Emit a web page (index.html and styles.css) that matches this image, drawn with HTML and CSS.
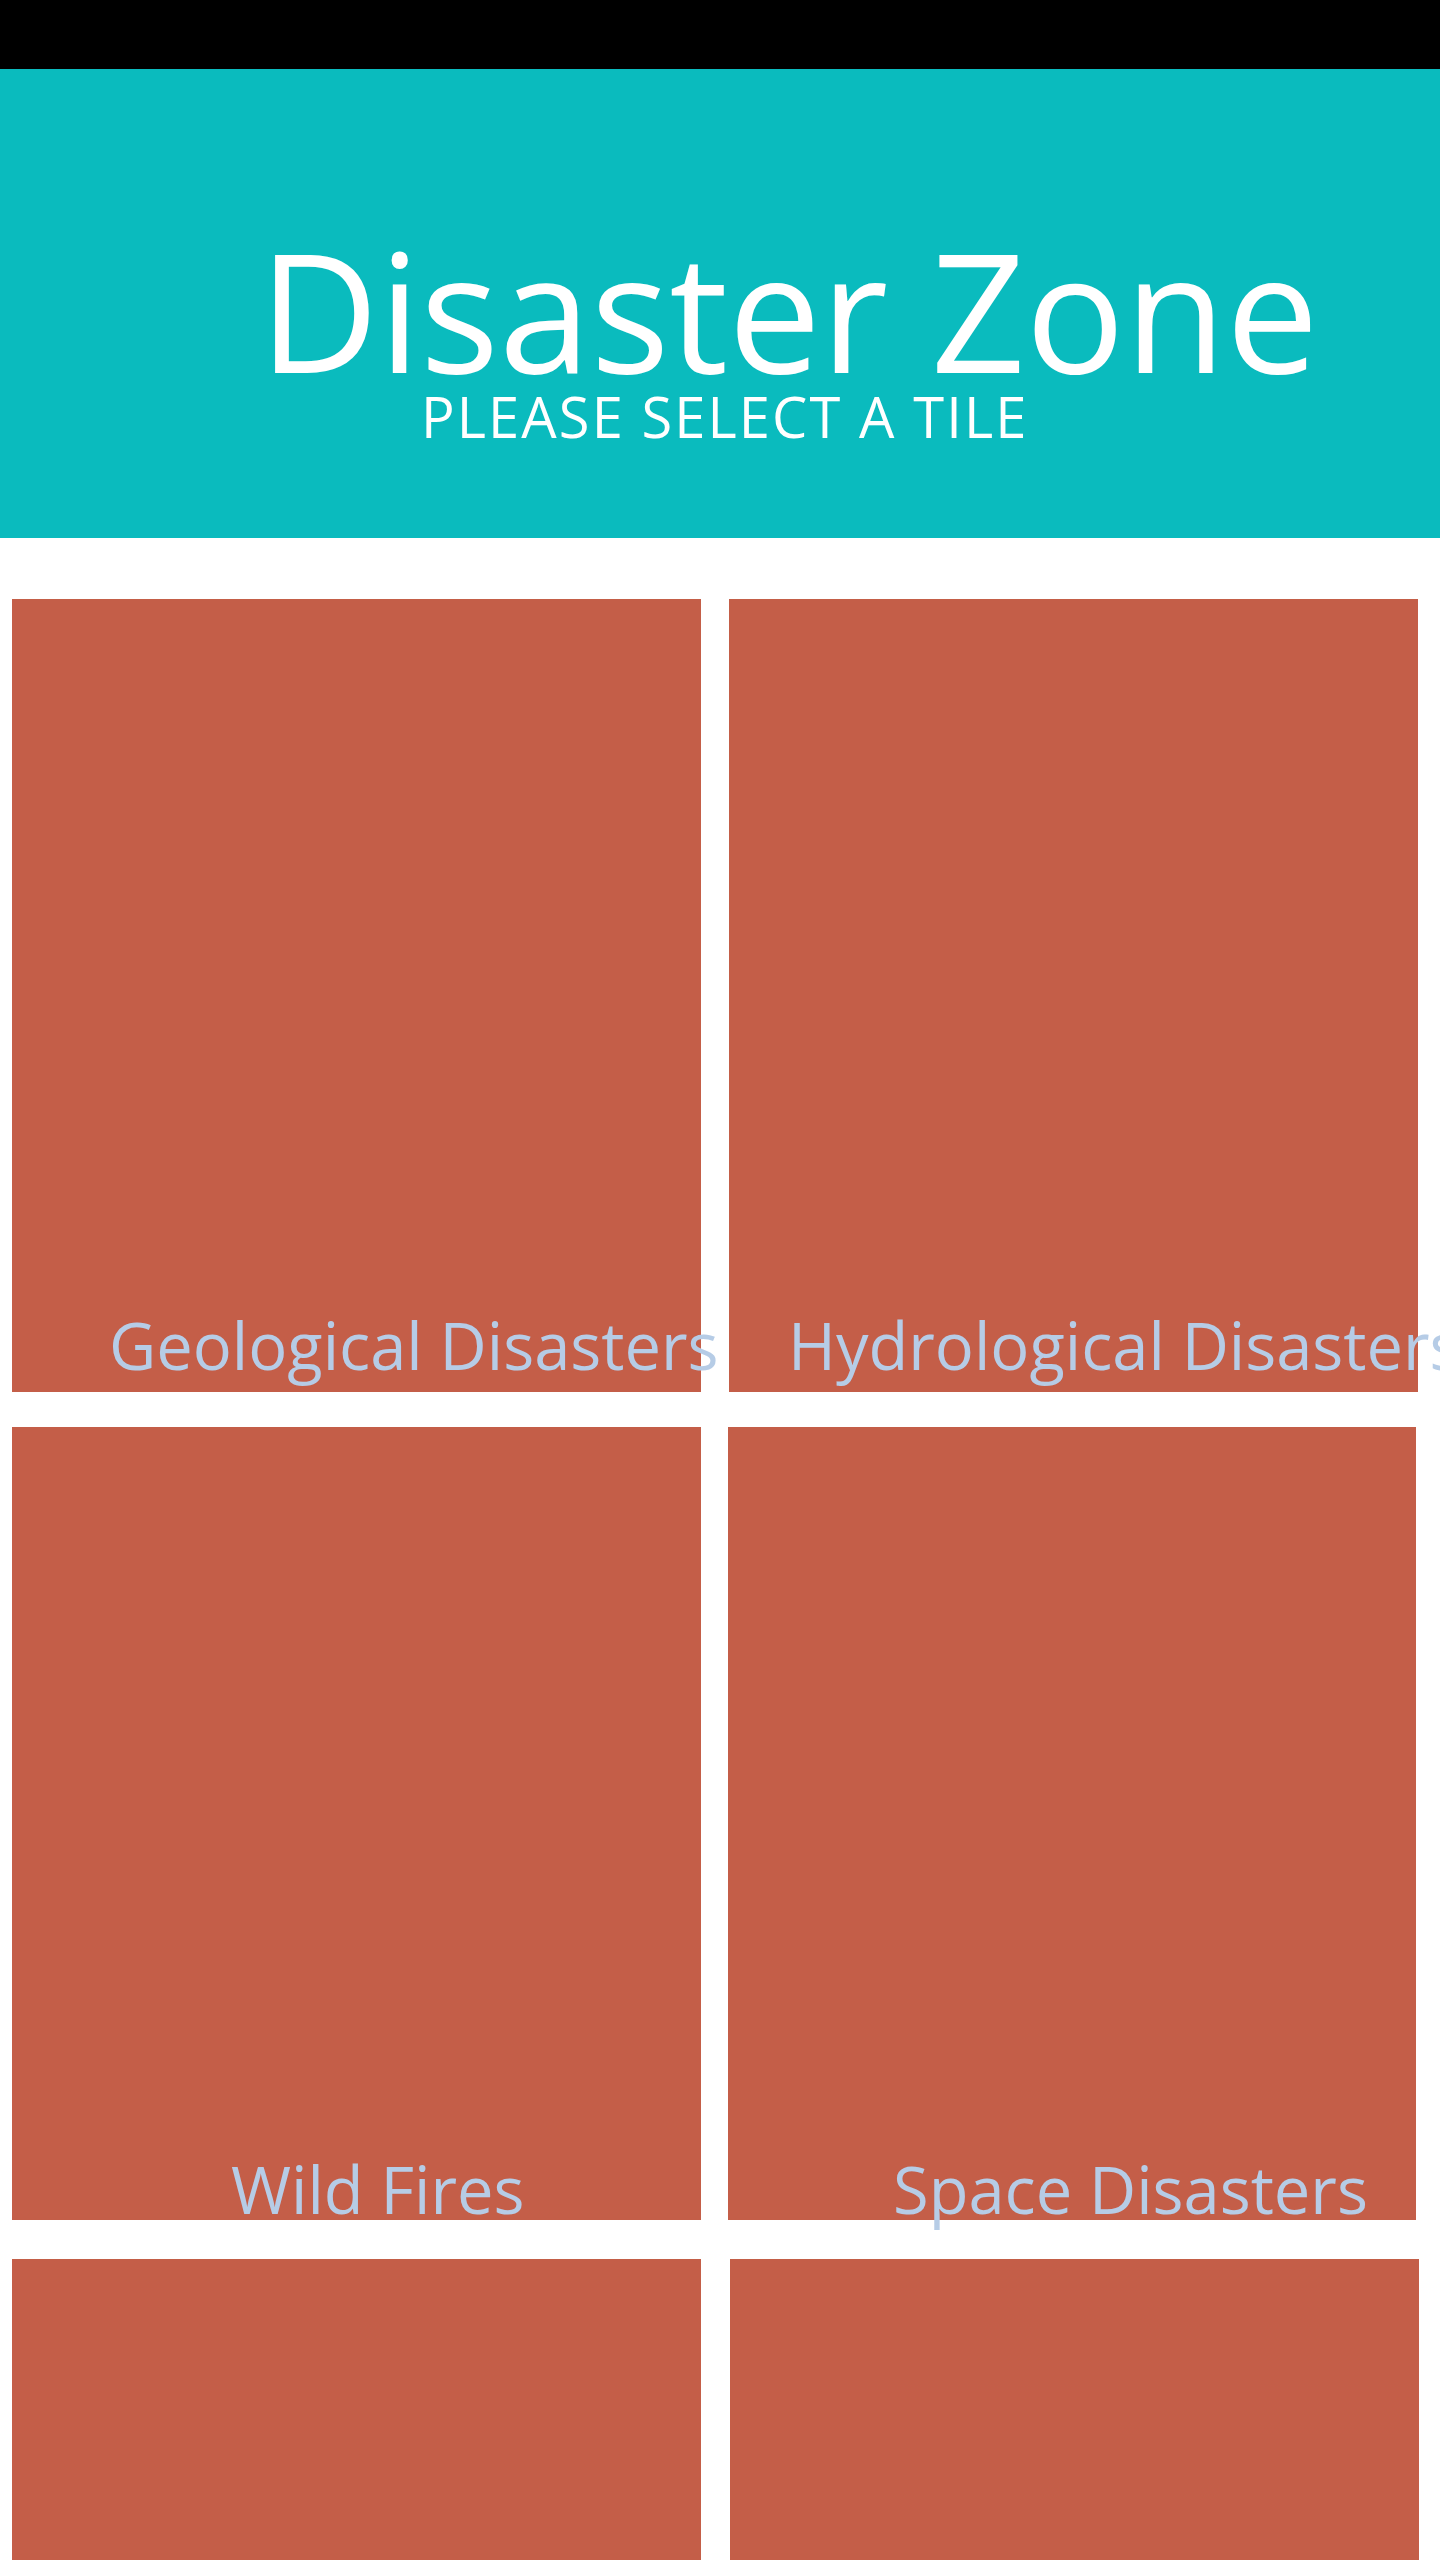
FILE: index.html
```html
<!DOCTYPE html>
<html lang="en">
<head>
<meta charset="utf-8">
<title>Disaster Zone</title>
<link rel="stylesheet" href="styles.css">
</head>
<body>
<div class="page">
  <div class="topbar"></div>
  <header class="hero">
    <h1 class="hero__title">Disaster Zone</h1>
    <p class="hero__subtitle">PLEASE SELECT A TILE</p>
  </header>
  <main class="tiles">
    <div class="tiles__row tiles__row--first">
      <a class="tile tile--geo" href="#"><span class="tile__label">Geological Disasters</span></a>
      <a class="tile tile--hydro" href="#"><span class="tile__label">Hydrological Disasters</span></a>
    </div>
    <div class="tiles__row tiles__row--second">
      <a class="tile tile--fire" href="#"><span class="tile__label">Wild Fires</span></a>
      <a class="tile tile--space" href="#"><span class="tile__label">Space Disasters</span></a>
    </div>
    <div class="tiles__row tiles__row--third">
      <a class="tile tile--short" href="#"></a>
      <a class="tile tile--short tile--shift" href="#"></a>
    </div>
  </main>
</div>
</body>
</html>
```

FILE: styles.css
```css
html, body {
  margin: 0;
  padding: 0;
  background: #ffffff;
}

body {
  font-family: "Open Sans", "Noto Sans", sans-serif;
}

.page {
  width: 1440px;
  overflow-x: clip;
}

.topbar {
  height: 69px;
  background: #000000;
}

.hero {
  height: 469px;
  box-sizing: border-box;
  background: #0abbbe;
  color: #ffffff;
  padding-top: 158px;
  display: flex;
  flex-direction: column;
}

.hero__title {
  margin: 0 0 0 259px;
  font-size: 165px;
  font-weight: 400;
  line-height: 1;
  white-space: nowrap;
}

.hero__subtitle {
  margin: -4px 0 0 421px;
  font-size: 56px;
  font-weight: 400;
  line-height: 1;
  letter-spacing: 2.1px;
  white-space: nowrap;
}

.tiles {
  padding: 61px 0 0 12px;
  display: flex;
  flex-direction: column;
}

.tiles__row {
  display: flex;
  gap: 28px;
}

.tiles__row--second {
  margin-top: 35px;
}

.tiles__row--third {
  margin-top: 39px;
}

.tile {
  width: 689px;
  height: 793px;
  background: #c45e48;
  display: flex;
  flex-direction: column;
  justify-content: flex-end;
  text-decoration: none;
  flex: none;
}

.tile--short {
  height: 301px;
}

.tile--shift {
  margin-left: 1px;
}

.tile__label {
  display: block;
  font-size: 65px;
  line-height: 1;
  color: #b6cce6;
  white-space: nowrap;
}

.tile--geo .tile__label {
  padding: 0 0 14px 97px;
}

.tile--hydro .tile__label {
  padding: 0 0 14px 59px;
}

.tile--fire .tile__label {
  padding-left: 219px;
  margin-bottom: -2px;
}

.tiles__row--second .tile--space {
  width: 688px;
  margin-left: -1px;
}

.tile--space .tile__label {
  padding-left: 165px;
  margin-bottom: -2px;
}
```
